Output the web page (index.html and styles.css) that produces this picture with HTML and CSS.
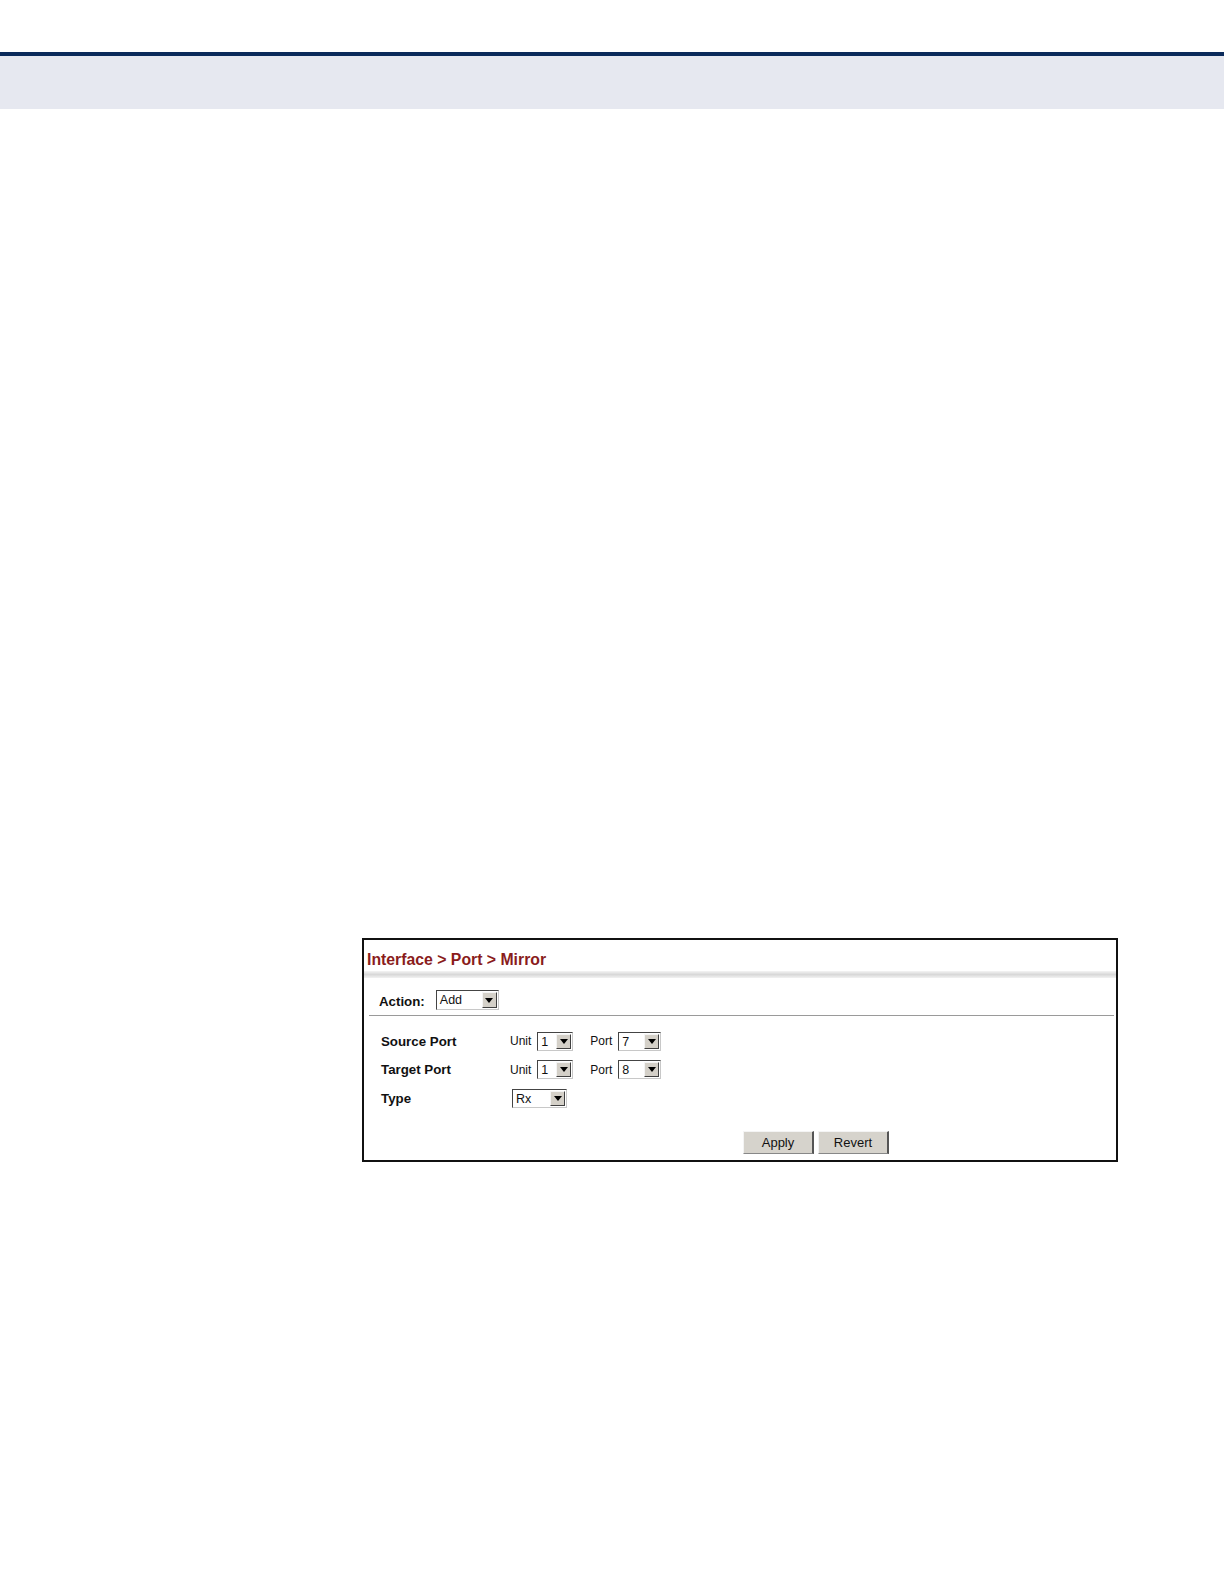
FILE: index.html
```html
<!DOCTYPE html>
<html>
<head>
<meta charset="utf-8">
<link rel="stylesheet" href="styles.css">
</head>
<body>
<div class="page-header"></div>
<div class="panel">
  <div class="panel-title">Interface &gt; Port &gt; Mirror</div>
  <div class="title-band"></div>
  <div class="action-row">
    <span class="label-bold">Action:</span>
    <span class="select sel-action"><span class="sel-text">Add</span><span class="sel-btn"><span class="tri"></span></span></span>
  </div>
  <div class="form">
    <div class="form-row">
      <span class="row-label">Source Port</span>
      <span class="field-label">Unit</span>
      <span class="select sel-small"><span class="sel-text">1</span><span class="sel-btn"><span class="tri"></span></span></span>
      <span class="field-label port-label">Port</span>
      <span class="select sel-port"><span class="sel-text">7</span><span class="sel-btn"><span class="tri"></span></span></span>
    </div>
    <div class="form-row">
      <span class="row-label">Target Port</span>
      <span class="field-label">Unit</span>
      <span class="select sel-small"><span class="sel-text">1</span><span class="sel-btn"><span class="tri"></span></span></span>
      <span class="field-label port-label">Port</span>
      <span class="select sel-port"><span class="sel-text">8</span><span class="sel-btn"><span class="tri"></span></span></span>
    </div>
    <div class="form-row">
      <span class="row-label">Type</span>
      <span class="select sel-type"><span class="sel-text">Rx</span><span class="sel-btn"><span class="tri"></span></span></span>
    </div>
  </div>
  <div class="buttons">
    <span class="btn">Apply</span>
    <span class="btn">Revert</span>
  </div>
</div>
</body>
</html>
```

FILE: styles.css
```css
html, body {
  margin: 0;
  padding: 0;
  background: #ffffff;
  font-family: "Liberation Sans", Arial, sans-serif;
}
.page-header {
  margin-top: 52px;
  height: 53px;
  border-top: 4px solid #0b2a5b;
  background: #e6e8f0;
}
.panel {
  margin: 829px 0 0 362px;
  width: 752px;
  height: 220px;
  border: 2px solid #111111;
  display: flex;
  flex-direction: column;
}
.panel-title {
  padding: 9px 0 0 3px;
  height: 22px;
  line-height: 22px;
  font-size: 15.8px;
  font-weight: bold;
  color: #8a1c1c;
}
.title-band {
  height: 7px;
  background: linear-gradient(#f4f4f4, #d8d8d8 50%, #f2f2f2);
}
.action-row {
  display: flex;
  align-items: center;
  gap: 11px;
  padding: 12px 0 0 15px;
  height: 20px;
}
.label-bold {
  font-size: 13.3px;
  font-weight: bold;
  color: #111;
  padding-top: 3px;
}
.form {
  margin: 5px 2px 0 5px;
  border-top: 1px solid #9a9a9a;
  padding: 15px 0 0 12px;
  display: flex;
  flex-direction: column;
  gap: 8.5px;
}
.form-row {
  display: flex;
  align-items: center;
  height: 20px;
}
.row-label {
  width: 129px;
  font-size: 13.3px;
  font-weight: bold;
  color: #111;
}
.field-label {
  font-size: 12px;
  color: #111;
  margin-right: 6px;
}
.port-label {
  margin-left: 17px;
}
.select {
  display: inline-flex;
  height: 19px;
  box-sizing: border-box;
  border: 1px solid #444;
  border-right-color: #c8c8c8;
  border-bottom-color: #c8c8c8;
  background: #fff;
  padding: 1px;
}
.sel-text {
  flex: 1;
  font-size: 12.5px;
  line-height: 16px;
  padding-left: 2px;
  color: #111;
}
.sel-btn {
  width: 15px;
  background: #d4d0c8;
  box-sizing: border-box;
  border: 1px solid #f4f4f4;
  border-right-color: #404040;
  border-bottom-color: #404040;
  display: flex;
  align-items: center;
  justify-content: center;
}
.tri {
  width: 0;
  height: 0;
  border-left: 4px solid transparent;
  border-right: 4px solid transparent;
  border-top: 5px solid #000;
}
.sel-action { width: 63px; height: 20px; }
.sel-small { width: 36px; }
.sel-port { width: 43px; }
.sel-type { width: 55px; margin-left: 2px; }
.buttons {
  display: flex;
  justify-content: flex-start;
  gap: 4px;
  padding-left: 379px;
  margin-top: 23px;
}
.btn {
  width: 71px;
  height: 23px;
  box-sizing: border-box;
  background: #d6d3cc;
  border: 1px solid #f4f4f4;
  border-right: 2px solid #555;
  border-bottom: 1px solid #888;
  font-size: 13px;
  line-height: 21px;
  text-align: center;
  color: #111;
}
```
